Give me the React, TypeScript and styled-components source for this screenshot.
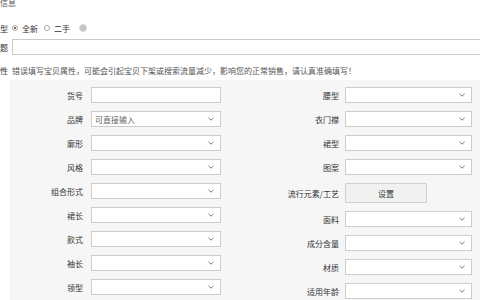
import React from "react";
import styled, { createGlobalStyle } from "styled-components";

const GlobalStyle = createGlobalStyle`
  html, body {
    margin: 0;
    padding: 0;
    background: #ffffff;
    overflow: hidden;
  }
  body {
    font-family: "Noto Sans CJK SC", "Noto Sans", sans-serif;
    color: #333;
  }
`;

// page is shifted left so that the row labels are cut off like in the screenshot
const Page = styled.div`
  margin-left: -60px;
  width: 560px;
`;

const Heading = styled.div`
  height: 10px;
  margin-top: -2px;
  padding-left: 28px;
  font-size: 8px;
  line-height: 10px;
  color: #555;
`;

const FormRow = styled.div<{ $top: number; $height: number }>`
  display: flex;
  align-items: center;
  margin-top: ${(p) => p.$top}px;
  height: ${(p) => p.$height}px;
`;

const RowLabel = styled.div`
  width: 72px;
  padding-right: 4px;
  box-sizing: border-box;
  text-align: right;
  font-size: 8px;
  color: #333;
  flex-shrink: 0;
`;

const RadioGroup = styled.div`
  display: flex;
  align-items: center;
  font-size: 8px;
  color: #333;
`;

const Radio = styled.span<{ $checked?: boolean }>`
  width: 6px;
  height: 6px;
  border-radius: 50%;
  border: 1px solid #a8a8a8;
  background: #fff;
  box-sizing: border-box;
  display: inline-flex;
  align-items: center;
  justify-content: center;
  margin-right: 4px;
  &::after {
    content: "";
    width: 2px;
    height: 2px;
    border-radius: 50%;
    background: ${(p) => (p.$checked ? "#444" : "transparent")};
  }
`;

const RadioText = styled.span`
  margin-right: 6px;
`;

const HelpDot = styled.span`
  width: 8px;
  height: 8px;
  border-radius: 50%;
  background: #c4c4c4;
  border: 1px solid #d8d8d8;
  box-sizing: border-box;
  margin-left: 3px;
`;

const TitleInput = styled.input`
  flex: 1;
  height: 16px;
  box-sizing: border-box;
  border: 1px solid #c9c9c9;
  background: #fff;
  outline: none;
  padding: 0 3px;
  font-size: 8px;
`;

const Note = styled.div`
  font-size: 8px;
  color: #555;
  white-space: nowrap;
`;

const Panel = styled.div`
  margin-top: 5px;
  margin-left: 70px;
  background: #f6f6f6;
  padding-top: 7px;
  height: 213px;
  display: flex;
`;

const Column = styled.div`
  display: flex;
  flex-direction: column;
  gap: 8px;
`;

const FieldRow = styled.div<{ $labelWidth: number; $gap: number }>`
  display: flex;
  align-items: center;
  gap: ${(p) => p.$gap}px;
  & > label {
    width: ${(p) => p.$labelWidth}px;
  }
`;

const FieldLabel = styled.label`
  text-align: right;
  font-size: 8px;
  color: #333;
  white-space: nowrap;
  flex-shrink: 0;
`;

const Box = styled.div<{ $width: number }>`
  width: ${(p) => p.$width}px;
  height: 16px;
  box-sizing: border-box;
  border: 1px solid #cdcdcd;
  background: #fff;
  display: flex;
  align-items: center;
  justify-content: space-between;
  padding: 0 6px 0 3px;
  font-size: 8px;
  color: #666;
  flex-shrink: 0;
`;

const TextBox = styled.input<{ $width: number }>`
  width: ${(p) => p.$width}px;
  height: 16px;
  box-sizing: border-box;
  border: 1px solid #cdcdcd;
  background: #fff;
  outline: none;
  padding: 0 3px;
  font-size: 8px;
`;

const SetButton = styled.button`
  width: 82px;
  height: 20px;
  box-sizing: border-box;
  border: 1px solid #d0d0d0;
  border-radius: 1px;
  background: #f1f1f1;
  font-family: inherit;
  font-size: 8px;
  color: #333;
  padding: 0;
`;

const ErrorDot = styled.span`
  width: 8px;
  height: 8px;
  border-radius: 50%;
  background: #e0392c;
  margin-left: 2px;
  flex-shrink: 0;
`;

const Chevron = () => (
  <svg width="6" height="4" viewBox="0 0 6 4">
    <polyline points="0.5,0.8 3,3.2 5.5,0.8" fill="none" stroke="#777" strokeWidth="1" />
  </svg>
);

const Select = ({ width, value }: { width: number; value?: string }) => (
  <Box $width={width}>
    <span>{value || ""}</span>
    <Chevron />
  </Box>
);

const leftFields: { label: string; kind: "text" | "select"; value?: string }[] = [
  { label: "货号", kind: "text" },
  { label: "品牌", kind: "select", value: "可直接输入" },
  { label: "廓形", kind: "select" },
  { label: "风格", kind: "select" },
  { label: "组合形式", kind: "select" },
  { label: "裙长", kind: "select" },
  { label: "款式", kind: "select" },
  { label: "袖长", kind: "select" },
  { label: "领型", kind: "select" },
];

const rightFields: { label: string; kind: "select" | "button" }[] = [
  { label: "腰型", kind: "select" },
  { label: "衣门襟", kind: "select" },
  { label: "裙型", kind: "select" },
  { label: "图案", kind: "select" },
  { label: "流行元素/工艺", kind: "button" },
  { label: "面料", kind: "select" },
  { label: "成分含量", kind: "select" },
  { label: "材质", kind: "select" },
  { label: "适用年龄", kind: "select" },
];

export default function App() {
  return (
    <Page>
      <GlobalStyle />
      <Heading>宝贝基本信息</Heading>

      <FormRow $top={15} $height={10}>
        <RowLabel>宝贝类型</RowLabel>
        <RadioGroup>
          <Radio $checked />
          <RadioText>全新</RadioText>
          <Radio />
          <RadioText>二手</RadioText>
          <HelpDot />
        </RadioGroup>
      </FormRow>

      <FormRow $top={6} $height={16}>
        <RowLabel>宝贝标题</RowLabel>
        <TitleInput />
      </FormRow>

      <FormRow $top={10} $height={10}>
        <RowLabel>宝贝属性</RowLabel>
        <Note>错误填写宝贝属性，可能会引起宝贝下架或搜索流量减少，影响您的正常销售，请认真准确填写！</Note>
      </FormRow>

      <Panel>
        <Column>
          {leftFields.map((f) => (
            <FieldRow key={f.label} $labelWidth={73} $gap={8}>
              <FieldLabel>{f.label}</FieldLabel>
              {f.kind === "text" ? <TextBox $width={130} /> : <Select width={130} value={f.value} />}
            </FieldRow>
          ))}
        </Column>
        <Column>
          {rightFields.map((f, i) => (
            <FieldRow key={f.label} $labelWidth={118} $gap={6}>
              <FieldLabel>{f.label}</FieldLabel>
              {f.kind === "button" ? <SetButton>设置</SetButton> : <Select width={127} />}
              {i === rightFields.length - 1 && <ErrorDot />}
            </FieldRow>
          ))}
        </Column>
      </Panel>
    </Page>
  );
}
